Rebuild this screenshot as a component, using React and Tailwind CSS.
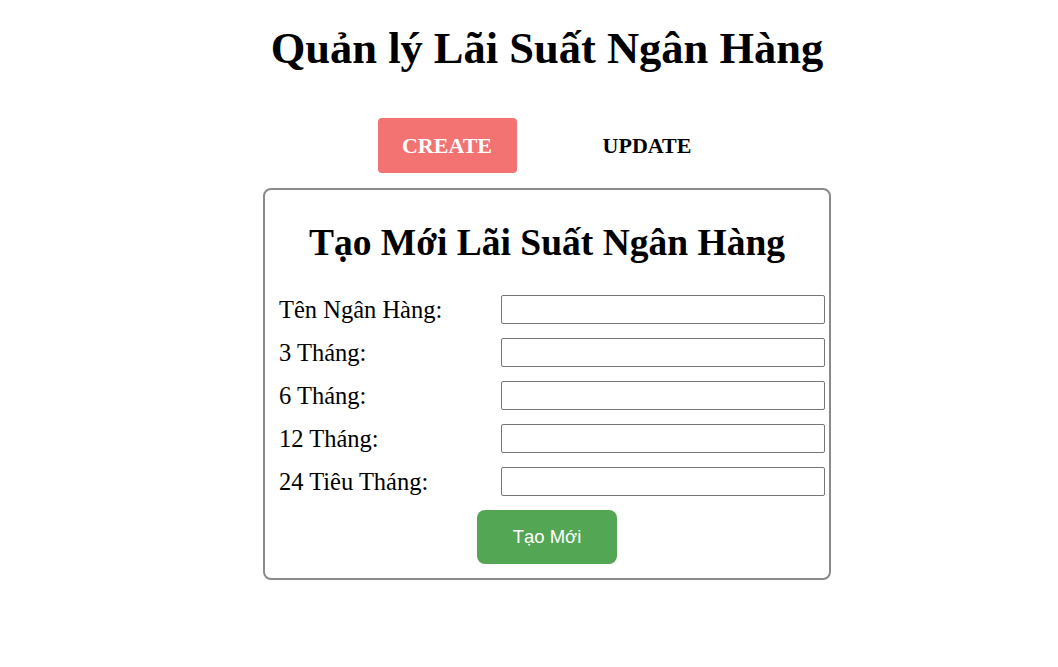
import React from "react";

const fields = ["Tên Ngân Hàng:", "3 Tháng:", "6 Tháng:", "12 Tháng:", "24 Tiêu Tháng:"];

const App = () => {
    return (
        <div className="min-h-[667px] bg-white pl-[36px] text-black" style={{ fontFamily: '"Liberation Serif", "Times New Roman", serif' }}>
            <div className="flex flex-col items-center">
                <h1 className="mt-[20px] text-[44.5px] font-bold leading-[56px]">Quản lý Lãi Suất Ngân Hàng</h1>
                <div className="mt-[42px] flex gap-[61px]">
                    <button className="h-[55px] w-[139px] rounded-[4px] bg-[#f37272] text-[22px] font-bold text-white">CREATE</button>
                    <button className="h-[55px] w-[139px] rounded-[4px] text-[22px] font-bold text-black">UPDATE</button>
                </div>
                <div className="mt-[15px] flex h-[392px] w-[568px] flex-col rounded-[8px] border-2 border-[#8a8a8a] px-[14px]">
                    <h2 className="mt-[28px] text-center text-[37.5px] font-bold leading-[50px]">Tạo Mới Lãi Suất Ngân Hàng</h2>
                    <div className="mt-[27px] flex flex-col gap-[14px]">
                        {fields.map((f) => (
                            <div key={f} className="flex items-center">
                                <label className="w-[222px] shrink-0 text-[24.5px] leading-[29px]">{f}</label>
                                <input className="h-[29px] w-[324px] shrink-0 rounded-[2px] border border-[#767676]" />
                            </div>
                        ))}
                    </div>
                    <div className="mt-[14px] flex justify-center">
                        <button className="h-[54px] w-[140px] rounded-[8px] bg-[#53a653] text-[18.5px] text-white" style={{ fontFamily: '"Liberation Sans", Arial, sans-serif' }}>Tạo Mới</button>
                    </div>
                </div>
            </div>
        </div>
    );
};

export default App;
